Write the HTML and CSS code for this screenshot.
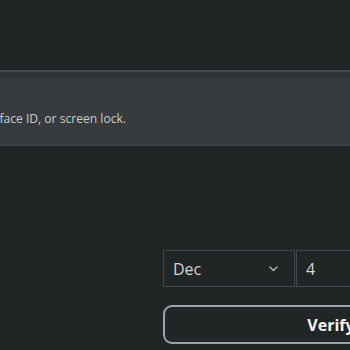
FILE: index.html
```html
<!DOCTYPE html>
<html lang="en">
<head>
  <meta charset="UTF-8">
  <title>Verify</title>
  <link rel="stylesheet" href="styles.css">
</head>
<body>
  <div class="header"></div>

  <!-- Notice banner -->
  <div class="banner">
    <div class="banner-strip"></div>
    <div class="banner-body">
      <div class="banner-text">
        <p>Use your fingerprint, face ID, or screen lock.</p>
      </div>
    </div>
  </div>

  <!-- Date form -->
  <div class="form">
    <div class="date-row">
      <div class="select-box">
        <span>Dec</span>
        <svg class="chevron" width="9" height="6" viewBox="0 0 9 6">
          <path d="M1 1 L4.5 4.5 L8 1" fill="none" stroke="#b4b7b9" stroke-width="1.4" stroke-linecap="round" stroke-linejoin="round"/>
        </svg>
      </div>
      <div class="input-box">4</div>
    </div>
    <button class="verify-btn">Verify</button>
  </div>
</body>
</html>
```

FILE: styles.css
```css
body {
  margin: 0;
  padding: 0;
  overflow: hidden;
  background-color: #212526;
  color: #d2d4d5;
  font-family: 'Open Sans', 'Noto Sans', sans-serif;
}

.header {
  height: 70px;
}

.banner {
  background-color: #373b3e;
  border-top: 2px solid #45494c;
  border-bottom: 1px solid #45494c;
}

.banner-strip {
  height: 6px;
  background-color: #2f3336;
}

.banner-body {
  height: 67px;
  display: flex;
  align-items: center;
  padding-top: 14px;
  box-sizing: border-box;
}

/* text runs off the left edge of the shot */
.banner-text {
  width: 126px;
  flex-shrink: 0;
  display: flex;
  justify-content: flex-end;
  white-space: nowrap;
}

.banner-text p {
  margin: 0;
  font-size: 12.1px;
  color: #c9cbcc;
}

.form {
  padding-left: 163px;
  padding-top: 104px;
}

.date-row {
  display: flex;
  gap: 1px;
}

.select-box {
  width: 132px;
  height: 37px;
  flex-shrink: 0;
  box-sizing: border-box;
  border: 1px solid #43474a;
  display: flex;
  align-items: center;
  justify-content: space-between;
  padding: 0 16px 0 9px;
  font-size: 16px;
}

.input-box {
  width: 120px;
  height: 37px;
  flex-shrink: 0;
  box-sizing: border-box;
  border: 1px solid #43474a;
  display: flex;
  align-items: center;
  padding-left: 9px;
  font-size: 16px;
}

.verify-btn {
  margin-top: 18px;
  width: 336px;
  height: 39px;
  background-color: transparent;
  border: 2px solid #9fa2a4;
  border-radius: 9px;
  color: #f2f3f3;
  font-family: 'Open Sans', 'Noto Sans', sans-serif;
  font-size: 16px;
  font-weight: 700;
}
```
